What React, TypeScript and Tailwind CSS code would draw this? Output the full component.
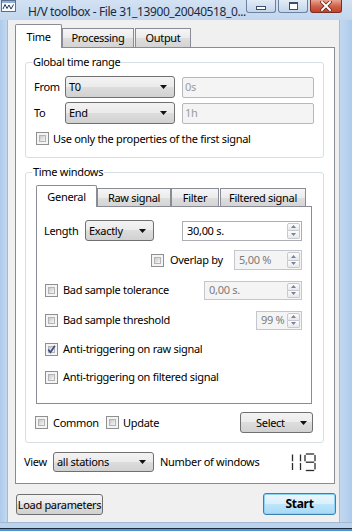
import React from "react";

function Arrow() {
  return (
    <svg width="7" height="4" viewBox="0 0 7 4" className="shrink-0">
      <path d="M0 0H7L3.5 4Z" fill="#111" />
    </svg>
  );
}

function Check({ checked = false }: { checked?: boolean }) {
  return (
    <span className="relative block w-[13px] h-[13px] shrink-0 border border-[#8e8f8f] bg-[#f4f4f4]">
      <span className="absolute inset-[2px] border border-[#b4b4b4] bg-[linear-gradient(135deg,#c9c9c9,#f7f7f7)]" />
      {checked && (
        <svg className="absolute left-[0px] top-[0px]" width="11" height="11" viewBox="0 0 11 11">
          <path d="M2.3 5.6 L4.5 8.3 L8.9 1.8" fill="none" stroke="#3e4f8c" strokeWidth="1.7" />
        </svg>
      )}
    </span>
  );
}

function Combo({ text, className }: { text: string; className: string }) {
  return (
    <div
      className={`${className} shrink-0 flex items-center justify-between rounded-[3px] border border-[#707070] bg-[linear-gradient(#f3f3f3,#ebebeb_48%,#dddddd_50%,#d1d1d1)] pl-[3px] pr-[7px]`}
    >
      <span className="leading-[14px] whitespace-nowrap">{text}</span>
      <Arrow />
    </div>
  );
}

function Spin({ text, className, disabled = false }: { text: string; className: string; disabled?: boolean }) {
  return (
    <div
      className={`${className} shrink-0 flex items-center border ${
        disabled ? "border-[#c3c7cc] bg-[#f4f4f4] text-[#7b7b7b]" : "border-[#abadb3] bg-white text-black"
      }`}
    >
      <span className="flex-1 pl-[4px] leading-[14px] whitespace-nowrap">{text}</span>
      <div className="flex flex-col h-full w-[14px] py-[1px] pr-[1px]">
        <div className="flex-1 flex items-center justify-center border border-[#c6cad0] rounded-t-[2px] bg-[linear-gradient(#fdfdfd,#e8e8e8)]">
          <svg width="5" height="3" viewBox="0 0 5 3">
            <path d="M0 3H5L2.5 0Z" fill="#7383a0" />
          </svg>
        </div>
        <div className="flex-1 flex items-center justify-center border border-t-0 border-[#c6cad0] rounded-b-[2px] bg-[linear-gradient(#fdfdfd,#e8e8e8)]">
          <svg width="5" height="3" viewBox="0 0 5 3">
            <path d="M0 0H5L2.5 3Z" fill="#7383a0" />
          </svg>
        </div>
      </div>
    </div>
  );
}

function Group({ title, className, children }: { title: string; className: string; children?: React.ReactNode }) {
  return (
    <div className={`relative shrink-0 rounded-[3px] border border-[#d5dfe5] ${className}`}>
      <span className="absolute left-[6px] top-[-8px] px-[1px] bg-white leading-[14px] whitespace-nowrap">{title}</span>
      {children}
    </div>
  );
}

const tabOff =
  "shrink-0 flex items-center justify-center border border-b-0 border-[#898c95] bg-[linear-gradient(#f6f6f6,#ebebeb_50%,#dedede_51%,#d4d4d4)] leading-[14px]";
const tabOn =
  "relative z-10 shrink-0 flex items-center justify-center border border-b-0 border-[#898c95] bg-white leading-[14px] -mb-px";

function CaptionButtons() {
  return (
    <div className="ml-auto mr-[10px] flex gap-[2px] shrink-0">
      <div className="w-[30px] h-[13px] rounded-b-[3px] border border-t-0 border-[#6a819f] bg-[linear-gradient(#e3ecf7,#c3d5ea)] flex items-center justify-center">
        <div className="mt-[3px] w-[10px] h-[4px] border border-[#3c4f6b] bg-white" />
      </div>
      <div className="w-[30px] h-[13px] rounded-b-[3px] border border-t-0 border-[#6a819f] bg-[linear-gradient(#e3ecf7,#c3d5ea)] flex items-center justify-center">
        <div className="w-[9px] h-[8px] border border-[#3c4f6b] border-t-[2px] bg-white" />
      </div>
      <div className="w-[32px] h-[13px] rounded-b-[3px] border border-t-0 border-[#7c2d22] bg-[linear-gradient(#e9a593,#d0644c_50%,#c4412a)] flex items-center justify-center">
        <svg width="12" height="10" viewBox="0 0 12 10">
          <path d="M2 1 L10 9 M10 1 L2 9" stroke="#5a1f18" strokeWidth="3.4" strokeLinecap="square" />
          <path d="M2 1 L10 9 M10 1 L2 9" stroke="#ffffff" strokeWidth="2" strokeLinecap="square" />
        </svg>
      </div>
    </div>
  );
}

function Lcd() {
  return (
    <svg width="30" height="19" viewBox="0 0 30 19" className="shrink-0">
      <g stroke="#2c2c2c" strokeWidth="1.3" strokeLinecap="butt">
        <line x1="4.5" y1="1.5" x2="4.5" y2="8.3" />
        <line x1="4.5" y1="10" x2="4.5" y2="17" />
        <line x1="12.5" y1="1.5" x2="12.5" y2="8.3" />
        <line x1="12.5" y1="10" x2="12.5" y2="17" />
        <line x1="17.8" y1="1" x2="26.2" y2="1" />
        <line x1="17" y1="2" x2="17" y2="8.3" />
        <line x1="27" y1="2" x2="27" y2="8.3" />
        <line x1="17.8" y1="9.2" x2="26.2" y2="9.2" />
        <line x1="27" y1="10" x2="27" y2="16.6" />
        <line x1="17.8" y1="17.5" x2="26.2" y2="17.5" />
      </g>
    </svg>
  );
}

export default function App() {
  return (
    <div className="w-[352px] h-[531px] overflow-hidden flex flex-col bg-[#b8d0eb] text-[11px] tracking-[-0.3px] text-black font-['Noto_Sans',sans-serif]">
      {/* title bar */}
      <div className="h-[20px] shrink-0 flex items-start bg-[linear-gradient(#d3e2f3,#c2d6ee)]">
        <svg width="15" height="13" viewBox="0 0 15 13" className="ml-[1px] shrink-0">
          <rect x="0.5" y="0.5" width="14" height="11" fill="#f8fbff" stroke="#5b6f8f" />
          <rect x="1" y="1" width="13" height="2" fill="#8fb0d8" />
          <path d="M2 9 L4 4.5 L6 8.5 L8 5 L10 9 L12.5 4.5" fill="none" stroke="#2a3550" strokeWidth="1" />
        </svg>
        <span className="ml-[12px] mt-[4px] text-[12px] leading-[16px] tracking-[-0.4px] whitespace-nowrap text-[#1e2a3a]">
          H/V toolbox - File 31_13900_20040518_0...
        </span>
        <CaptionButtons />
      </div>

      <div className="flex flex-1">
        <div className="w-[8px] shrink-0 border-r border-[#a3b9d3] bg-[linear-gradient(90deg,#aecbec,#c2d8f0)]" />
        {/* window body */}
        <div className="w-[331px] shrink-0 bg-[#f0f0f0] flex flex-col pt-[4px]">
          {/* outer tabs */}
          <div className="h-[23px] flex items-end pl-[7px]">
            <div className={`${tabOn} w-[47px] h-[24px] rounded-t-[2px]`}>Time</div>
            <div className={`${tabOff} w-[72px] h-[19px]`}>Processing</div>
            <div className={`${tabOff} w-[56px] h-[19px] ml-[1px]`}>Output</div>
          </div>
          {/* outer pane */}
          <div className="ml-[7px] w-[320px] h-[437px] border border-[#898c95] bg-white flex flex-col">
            <Group title="Global time range" className="mt-[14px] ml-[9px] w-[299px] h-[96px] flex flex-col pl-[8px] pt-[13px]">
              <div className="flex items-center h-[22px]">
                <span className="w-[31px] shrink-0 leading-[14px]">From</span>
                <Combo text="T0" className="w-[110px] h-[22px]" />
                <div className="ml-[7px] w-[132px] h-[21px] border border-[#b5b9bd] bg-[#f4f4f4] rounded-[2px] flex items-center pl-[2px] text-[#9c9c9c] leading-[14px]">
                  0s
                </div>
              </div>
              <div className="flex items-center h-[22px] mt-[4px]">
                <span className="w-[31px] shrink-0 leading-[14px]">To</span>
                <Combo text="End" className="w-[110px] h-[22px]" />
                <div className="ml-[7px] w-[132px] h-[21px] border border-[#b5b9bd] bg-[#f4f4f4] rounded-[2px] flex items-center pl-[2px] text-[#9c9c9c] leading-[14px]">
                  1h
                </div>
              </div>
              <div className="flex items-center h-[13px] mt-[8px] ml-[2px] gap-[4px]">
                <Check />
                <span className="leading-[14px] whitespace-nowrap">Use only the properties of the first signal</span>
              </div>
            </Group>

            <Group title="Time windows" className="mt-[14px] ml-[9px] w-[299px] h-[271px] flex flex-col pt-[12px]">
              {/* inner tabs */}
              <div className="h-[21px] flex items-end ml-[10px]">
                <div className={`${tabOn} w-[61px] h-[22px] rounded-t-[2px]`}>General</div>
                <div className={`${tabOff} w-[74px] h-[18px]`}>Raw signal</div>
                <div className={`${tabOff} w-[48px] h-[18px]`}>Filter</div>
                <div className={`${tabOff} w-[86px] h-[18px] ml-[1px]`}>Filtered signal</div>
              </div>
              <div className="ml-[10px] w-[276px] h-[198px] border border-[#898c95] bg-white flex flex-col pt-[13px] pr-[9px]">
                <div className="flex items-center h-[21px] pl-[7px]">
                  <span className="w-[41px] shrink-0 leading-[14px]">Length</span>
                  <Combo text="Exactly" className="w-[69px] h-[21px]" />
                  <Spin text="30,00 s." className="ml-auto w-[120px] h-[20px]" />
                </div>
                <div className="flex items-center h-[20px] mt-[9px]">
                  <span className="ml-[114px]">
                    <Check />
                  </span>
                  <span className="ml-[6px] leading-[14px] whitespace-nowrap">Overlap by</span>
                  <Spin text="5,00 %" disabled className="ml-auto w-[68px] h-[20px]" />
                </div>
                <div className="flex items-center h-[20px] mt-[10px] pl-[8px] gap-[5px]">
                  <Check />
                  <span className="leading-[14px] whitespace-nowrap">Bad sample tolerance</span>
                  <Spin text="0,00 s." disabled className="ml-auto w-[98px] h-[19px]" />
                </div>
                <div className="flex items-center h-[20px] mt-[10px] pl-[8px] gap-[5px]">
                  <Check />
                  <span className="leading-[14px] whitespace-nowrap">Bad sample threshold</span>
                  <Spin text="99 %" disabled className="ml-auto w-[46px] h-[19px]" />
                </div>
                <div className="flex items-center h-[20px] mt-[9px] pl-[8px] gap-[5px]">
                  <Check checked />
                  <span className="leading-[14px] whitespace-nowrap">Anti-triggering on raw signal</span>
                </div>
                <div className="flex items-center h-[20px] mt-[8px] pl-[8px] gap-[5px]">
                  <Check />
                  <span className="leading-[14px] whitespace-nowrap">Anti-triggering on filtered signal</span>
                </div>
              </div>
              <div className="flex items-center h-[21px] mt-[8px] pl-[9px] pr-[10px]">
                <div className="w-[71px] shrink-0 flex items-center gap-[5px]">
                  <Check />
                  <span className="leading-[14px]">Common</span>
                </div>
                <div className="flex items-center gap-[4px]">
                  <Check />
                  <span className="leading-[14px]">Update</span>
                </div>
                <div className="ml-auto w-[73px] h-[21px] flex items-center rounded-[3px] border border-[#707070] bg-[linear-gradient(#f3f3f3,#ebebeb_48%,#dddddd_50%,#d1d1d1)]">
                  <span className="ml-[15px] leading-[14px]">Select</span>
                  <span className="ml-auto mr-[5px] flex">
                    <Arrow />
                  </span>
                </div>
              </div>
            </Group>

            <div className="flex items-center h-[20px] mt-[9px] pl-[8px] pr-[16px]">
              <span className="w-[29px] shrink-0 leading-[14px]">View</span>
              <Combo text="all stations" className="w-[101px] h-[20px]" />
              <span className="ml-[6px] leading-[14px] whitespace-nowrap">Number of windows</span>
              <span className="ml-auto flex">
                <Lcd />
              </span>
            </div>
          </div>

          {/* bottom buttons */}
          <div className="flex items-start mt-[9px] pl-[8px] pr-[3px]">
            <div className="mt-[1px] w-[87px] h-[21px] flex items-center justify-center rounded-[3px] border border-[#707070] bg-[linear-gradient(#f3f3f3,#ebebeb_48%,#dddddd_50%,#d1d1d1)] leading-[14px] whitespace-nowrap">
              Load parameters
            </div>
            <div className="ml-auto w-[73px] h-[22px] flex items-center justify-center rounded-[3px] border border-[#3c7fb1] bg-[linear-gradient(#eaf6fd,#d9f0fc_48%,#bee6fd_50%,#a7d9f5)] shadow-[inset_0_0_0_1px_#8fd1f5] text-[12px] font-bold leading-[14px]">
              Start
            </div>
          </div>
        </div>
        <div className="flex-1 border-l border-[#a3b9d3] bg-[linear-gradient(90deg,#c2d8f0,#aecbec)]" />
      </div>
      <div className="h-[6px] shrink-0 border-t border-[#a3b9d3] bg-[#bcd3ed]" />
      <div className="h-[1px] shrink-0 bg-[#1c2a3c]" />
      <div className="h-[2px] shrink-0 bg-[#4b95d8]" />
    </div>
  );
}
